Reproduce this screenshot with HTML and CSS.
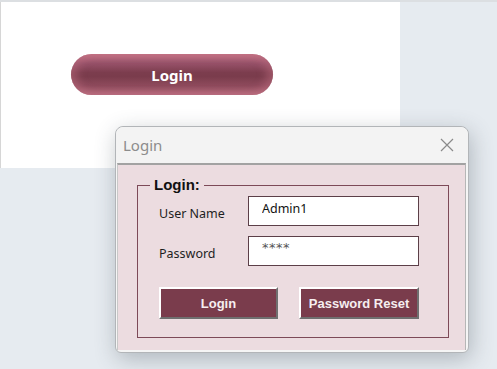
FILE: index.html
```html
<!DOCTYPE html>
<html lang="en">
<head>
    <meta charset="UTF-8">
    <meta name="viewport" content="width=device-width, initial-scale=1.0">
    <title>Login</title>
    <link rel="stylesheet" href="styles.css">
</head>
<body>
<div class="desktop">
    <div class="sheet">
        <button type="button" class="pill">Login</button>
    </div>

    <div class="dialog">
        <div class="titlebar">
            <span class="titlebar-text">Login</span>
            <svg class="close" width="14" height="14" viewBox="0 0 14 14">
                <path d="M1 1 L13 13 M13 1 L1 13" stroke="#8a8a8a" stroke-width="1.2" fill="none"/>
            </svg>
        </div>

        <div class="dialog-body">
            <fieldset class="group">
                <legend class="group-title">Login:</legend>

                <div class="form-grid">
                    <label class="form-label">User Name</label>
                    <input type="text" class="input" value="Admin1">

                    <label class="form-label">Password</label>
                    <input type="text" class="input masked" value="****">
                </div>

                <div class="actions">
                    <button type="button" class="button login">Login</button>
                    <button type="button" class="button reset">Password Reset</button>
                </div>
            </fieldset>
        </div>
    </div>
</div>
</body>
</html>
```

FILE: styles.css
```css
/* Workbook sheet with login form */
:root {
    --wine: #7a3c4c;
    --pink: #ecdce0;
    --desk: #e6ebf0;
}

body {
    margin: 0;
    font-family: "Noto Sans", "Liberation Sans", sans-serif;
    background-color: var(--desk);
}

.desktop {
    position: relative;
    width: 497px;
    height: 369px;
    border-top: 2px solid #dcdfe2;
    box-sizing: border-box;
    overflow: hidden;
}

.sheet {
    width: 400px;
    height: 166px;
    background: white;
    border-left: 1px solid #d6d6d6;
    padding: 52px 0 0 70px;
    box-sizing: border-box;
}

.pill {
    width: 202px;
    height: 41px;
    border: none;
    border-radius: 21px;
    background: linear-gradient(to bottom, #c67486 0%, #98526a 22%, #7c3d4e 45%, #7a3c4c 55%, #8f4b5d 78%, #b66b7c 100%);
    box-shadow: inset 6px 0 8px rgba(190, 110, 128, 0.5), inset -6px 0 8px rgba(190, 110, 128, 0.5);
    color: white;
    font-family: "Noto Sans", sans-serif;
    font-size: 15px;
    font-weight: 700;
    cursor: pointer;
}

/* window floating over the sheet */
.dialog {
    position: absolute;
    left: 115px;
    top: 124px;
    width: 354px;
    height: 227px;
    box-sizing: border-box;
    border: 1px solid #b2b5b8;
    border-radius: 8px 8px 6px 6px;
    background: #f5f5f5;
    box-shadow: 2px 6px 22px rgba(60, 70, 80, 0.32);
}

.titlebar {
    height: 36px;
    display: flex;
    align-items: center;
    justify-content: space-between;
    padding: 0 14px 0 7px;
    border-radius: 8px 8px 0 0;
    background: #f3f3f3;
}

.titlebar-text {
    font-size: 15px;
    color: #8c8c8c;
}

.close {
    display: block;
}

.dialog-body {
    margin: 0 2px 2px 1px;
    height: 187px;
    box-sizing: border-box;
    border-top: 2px solid #a2a2a2;
    border-left: 1px solid #c8c8c8;
    border-right: 1px solid #b6b6b6;
    background: var(--pink);
    padding: 11px 16px 12px 19px;
}

.group {
    margin: 0;
    height: 100%;
    box-sizing: border-box;
    border: 1px solid #7d4a58;
    padding: 2px 0 0 21px;
}

.group-title {
    margin-left: -9px;
    padding: 0 4px;
    font-family: "Liberation Sans", Arial, sans-serif;
    font-size: 15px;
    font-weight: 700;
    line-height: 18px;
    color: #111;
}

.form-grid {
    display: grid;
    grid-template-columns: 89px 171px;
    grid-auto-rows: 30px;
    row-gap: 10px;
}

.form-label {
    align-self: center;
    padding-top: 5px;
    font-size: 12.5px;
    color: #1e1e1e;
}

.input {
    width: 100%;
    height: 30px;
    box-sizing: border-box;
    border: 1px solid #5c3f48;
    background: white;
    padding: 2px 13px 8px;
    font-family: "Noto Sans", sans-serif;
    font-size: 12.5px;
    color: #111;
    outline: none;
}

.input.masked {
    font-family: "DejaVu Sans", sans-serif;
    font-size: 13px;
    letter-spacing: 0.5px;
    color: #555;
    padding-bottom: 10px;
}

.actions {
    display: flex;
    gap: 21px;
    margin-top: 21px;
}

.button {
    height: 32px;
    border: 2px solid;
    border-color: #ffffff #6f6f6f #6f6f6f #ffffff;
    background-color: var(--wine);
    color: #f6eef0;
    font-family: "Liberation Sans", Arial, sans-serif;
    font-size: 13px;
    font-weight: 700;
    padding: 0;
    cursor: pointer;
}

.button.login {
    width: 119px;
}

.button.reset {
    width: 120px;
}
```
